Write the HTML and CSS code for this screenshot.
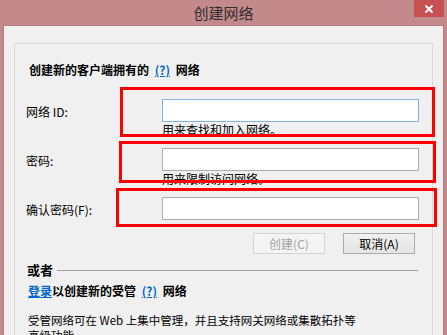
FILE: index.html
```html
<!DOCTYPE html>
<html lang="zh-CN">
  <head>
    <meta charset="UTF-8" />
    <title>创建网络</title>
    <link rel="stylesheet" href="styles.css">
  </head>
  <body>
    <div class="titlebar">
      <span class="title">创建网络</span>
      <button class="close-btn" aria-label="关闭">
        <svg width="10" height="10" viewBox="0 0 10 10">
          <path d="M1.5 1.5 L8.5 8.5 M8.5 1.5 L1.5 8.5" stroke="#fff" stroke-width="2" />
        </svg>
      </button>
    </div>

    <div class="window">
      <div class="panel">
        <h3 class="heading">创建新的客户端拥有的 <a href="#">(?)</a> 网络</h3>

        <div class="field first">
          <label for="net-id">网络 ID:</label>
          <input type="text" id="net-id" class="focused" />
          <p class="hint">用来查找和加入网络。</p>
        </div>

        <div class="field">
          <label for="pwd">密码:</label>
          <input type="password" id="pwd" />
          <p class="hint">用来限制访问网络。</p>
        </div>

        <div class="field last">
          <label for="pwd2">确认密码(F):</label>
          <input type="password" id="pwd2" />
        </div>

        <div class="actions">
          <button class="btn" disabled>创建(C)</button>
          <button class="btn">取消(A)</button>
        </div>

        <div class="divider">
          <span>或者</span>
          <hr />
        </div>

        <p class="managed"><a href="#">登录</a>以创建新的受管 <a href="#">(?)</a> 网络</p>

        <p class="desc">受管网络可在 Web 上集中管理，并且支持网关网络或集散拓扑等高级功能。</p>
      </div>
    </div>

    <!-- 红框标注 -->
    <div class="mark mark-1"></div>
    <div class="mark mark-2"></div>
    <div class="mark mark-3"></div>
  </body>
</html>
```

FILE: styles.css
```css
* {
  margin: 0;
  padding: 0;
  box-sizing: border-box;
}

body {
  position: relative;
  width: 447px;
  height: 335px;
  overflow: hidden;
  background: #c4898b;
  font-family: "Noto Sans CJK SC", "Noto Sans", sans-serif;
  font-size: 12px;
  color: #000;
}

.titlebar {
  position: relative;
  height: 25px;
  text-align: center;
}

.titlebar .title {
  font-size: 15px;
  line-height: 25px;
  color: #2e2e2e;
}

.close-btn {
  position: absolute;
  top: 0;
  right: 3px;
  width: 30px;
  height: 17px;
  border: none;
  background: #c75050;
  display: flex;
  align-items: center;
  justify-content: center;
}

.window {
  margin: 0 3px;
  height: 310px;
  background: #f0f0f0;
  border-left: 1px solid #b27c7e;
  border-top: 1px solid #b27c7e;
  border-right: 1px solid #b27c7e;
  padding: 17px 10px 0 10px;
}

.panel {
  height: 300px;
  border: 1px solid #dadada;
  padding: 18px 11px 0 11px;
}

.heading {
  margin-left: 3px;
  font-size: 12px;
  line-height: 16px;
  font-weight: bold;
}

a {
  color: #0066cc;
  text-decoration: underline;
}

.heading a,
.managed a {
  margin: 0 3px;
}

.managed a:first-child {
  margin: 0;
}

.field {
  display: grid;
  grid-template-columns: 136px 257px;
  margin-top: 11px;
}

.field.first {
  margin-top: 21px;
}

.field label {
  grid-row: 1;
  align-self: center;
  line-height: 16px;
  padding-top: 2px;
}

.field input {
  grid-row: 1;
  grid-column: 2;
  height: 23px;
  border: 1px solid #abadb3;
  background: #fff;
  outline: none;
}

.field input.focused {
  border-color: #7eb4ea;
}

.hint {
  grid-row: 2;
  grid-column: 2;
  margin-top: 1px;
  line-height: 14px;
}

.actions {
  display: flex;
  justify-content: flex-end;
  gap: 18px;
  width: 393px;
  padding-right: 4px;
  margin-top: 13px;
}

.btn {
  width: 72px;
  height: 21px;
  font-family: inherit;
  font-size: 12px;
  color: #000;
  border: 1px solid #acacac;
  background: linear-gradient(#f0f0f0, #e5e5e5);
}

.btn:disabled {
  color: #a3a3a3;
  border-color: #d5d5d5;
  background: #f4f4f4;
}

.divider {
  display: flex;
  align-items: center;
  width: 392px;
  margin-top: 8px;
  line-height: 16px;
}

.divider span {
  margin-left: 1px;
  font-weight: bold;
  font-size: 13px;
}

.divider hr {
  flex: 1;
  margin-left: 4px;
  border: none;
  border-top: 1px solid #a0a0a0;
}

.managed {
  margin: 5px 0 0 2px;
  line-height: 16px;
  font-weight: bold;
}

.desc {
  width: 330px;
  margin: 14px 0 0 2px;
  line-height: 15px;
  font-size: 11.5px;
}

/* 红框标注 */
.mark {
  position: absolute;
  border: 3px solid #ff0000;
}

.mark-1 {
  left: 120px;
  top: 87px;
  width: 315px;
  height: 50px;
}

.mark-2 {
  left: 119px;
  top: 141px;
  width: 317px;
  height: 42px;
}

.mark-3 {
  left: 116px;
  top: 188px;
  width: 321px;
  height: 39px;
}
```
